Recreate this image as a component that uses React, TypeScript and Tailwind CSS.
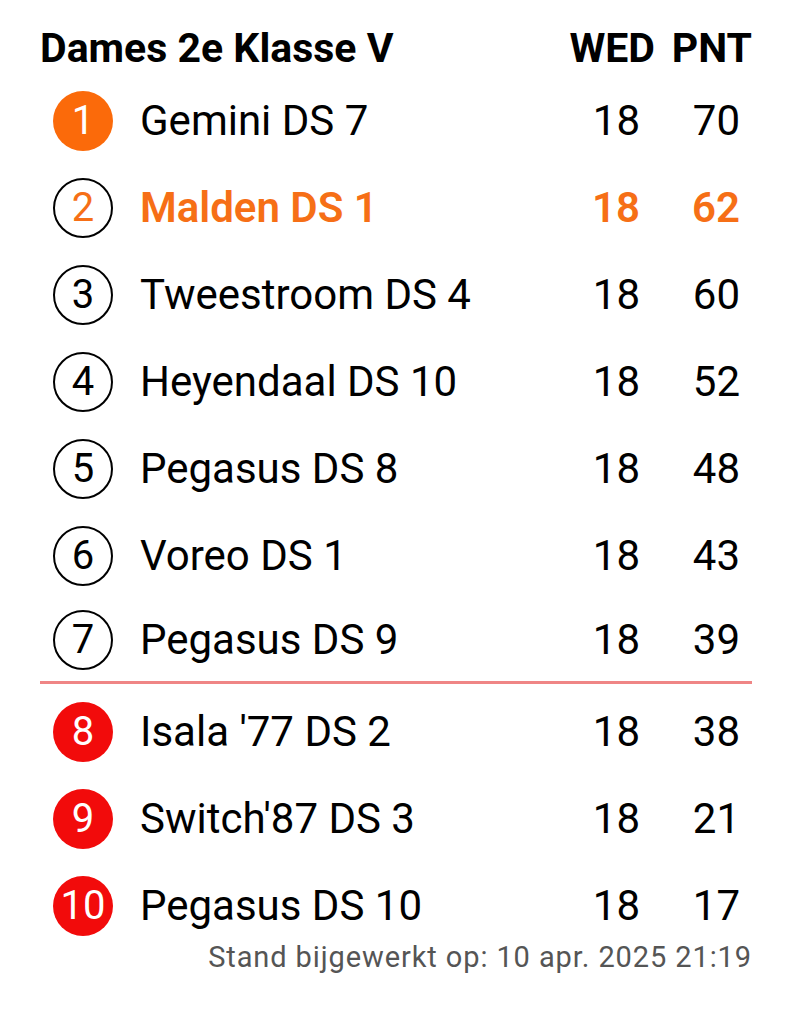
type Team = {
  pos: number
  name: string
  wed: number
  pnt: number
}

const teams: Team[] = [
  { pos: 1, name: 'Gemini DS 7', wed: 18, pnt: 70 },
  { pos: 2, name: 'Malden DS 1', wed: 18, pnt: 62 },
  { pos: 3, name: 'Tweestroom DS 4', wed: 18, pnt: 60 },
  { pos: 4, name: 'Heyendaal DS 10', wed: 18, pnt: 52 },
  { pos: 5, name: 'Pegasus DS 8', wed: 18, pnt: 48 },
  { pos: 6, name: 'Voreo DS 1', wed: 18, pnt: 43 },
  { pos: 7, name: 'Pegasus DS 9', wed: 18, pnt: 39 },
  { pos: 8, name: "Isala '77 DS 2", wed: 18, pnt: 38 },
  { pos: 9, name: "Switch'87 DS 3", wed: 18, pnt: 21 },
  { pos: 10, name: 'Pegasus DS 10', wed: 18, pnt: 17 },
]

const OWN_TEAM = 'Malden DS 1'

function Badge({ pos }: { pos: number }) {
  const own = pos === 2
  let style = 'border-2 border-black text-black'
  if (pos === 1) style = 'bg-[#fb6a0a] text-white'
  else if (pos >= 8) style = 'bg-[#f20b0b] text-white'
  else if (own) style = 'border-2 border-black text-[#f66f16]'
  return (
    <span
      className={`ml-[13px] flex h-[60px] w-[60px] items-center justify-center rounded-full text-[40px] leading-none ${style}`}
    >
      {pos}
    </span>
  )
}

function Row({ team, last }: { team: Team; last?: boolean }) {
  const own = team.name === OWN_TEAM
  const text = own ? 'font-semibold text-[#f66f16]' : 'text-black'
  return (
    <div className={`grid grid-cols-[100px_1fr_100px_97px] items-center ${last ? 'h-[81px]' : 'h-[87px]'}`}>
      <Badge pos={team.pos} />
      <span className={`text-[42px] leading-none ${text}`}>{team.name}</span>
      <span className={`pr-[15px] text-right text-[42px] leading-none ${text}`}>{team.wed}</span>
      <span className={`pr-[12px] text-right text-[42px] leading-none ${text}`}>{team.pnt}</span>
    </div>
  )
}

export default function App() {
  const top = teams.slice(0, 7)
  const bottom = teams.slice(7)
  return (
    <div className="h-[1024px] w-[793px] bg-white pl-[40px] pr-[41px] pt-[20px] font-['Roboto',sans-serif]">
      <div className="grid h-[57.5px] grid-cols-[200px_1fr_100px_97px] items-center text-[41px] font-bold leading-none text-black">
        <span className="col-span-2">Dames 2e Klasse V</span>
        <span className="text-right">WED</span>
        <span className="text-right">PNT</span>
      </div>
      {top.map((t, i) => (
        <Row key={t.pos} team={t} last={i === top.length - 1} />
      ))}
      <div className="h-[3px] bg-[#ef8585]" />
      <div className="mt-[5px]">
        {bottom.map((t) => (
          <Row key={t.pos} team={t} />
        ))}
      </div>
      <p className="-mt-[10px] text-right text-[29px] leading-[34px] tracking-[0.9px] text-[#555555]">
        Stand bijgewerkt op: 10 apr. 2025 21:19
      </p>
    </div>
  )
}
